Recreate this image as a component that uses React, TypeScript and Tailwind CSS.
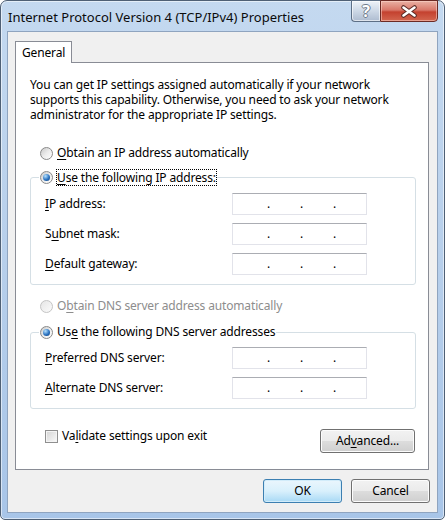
import React from "react";

const FONT = "font-['Segoe_UI','Noto_Sans',sans-serif]";

// underlined access key letter
function Key({ children }: { children: string }) {
    return <span className="underline decoration-[1px] underline-offset-[2px]">{children}</span>;
}

function Radio({ checked, disabled }: { checked?: boolean; disabled?: boolean }) {
    return (
        <span
            className={
                disabled
                    ? "flex h-[13px] w-[13px] shrink-0 items-center justify-center rounded-full border border-[#c4c4c4] bg-gradient-to-br from-[#e6e6e6] to-[#fbfbfb]"
                    : "flex h-[13px] w-[13px] shrink-0 items-center justify-center rounded-full border border-[#8a8a8a] bg-gradient-to-br from-[#c9c9c9] via-[#ececec] to-[#ffffff]"
            }
        >
            {checked && (
                <span className="h-[7px] w-[7px] rounded-full bg-[radial-gradient(circle_at_35%_30%,#b6e2ff,#2a72c0_55%,#0d3a70)]" />
            )}
        </span>
    );
}

function IpField() {
    return (
        <div className="flex h-[22px] w-[135px] items-center border border-[#e2e3ea] border-t-[#abadb3] bg-white pl-[19px]">
            <span className="w-[33px] text-center leading-[14px]">.</span>
            <span className="w-[33px] text-center leading-[14px]">.</span>
            <span className="w-[33px] text-center leading-[14px]">.</span>
        </div>
    );
}

function FieldRow({ label }: { label: React.ReactNode }) {
    return (
        <div className="flex h-[22px] items-center">
            <div className="w-[187px] leading-[16px]">{label}</div>
            <IpField />
        </div>
    );
}

function WinButton({ children, isDefault }: { children: React.ReactNode; isDefault?: boolean }) {
    return (
        <div
            className={
                isDefault
                    ? "flex h-[24px] w-[79px] items-center justify-center rounded-[3px] border border-[#3c7fb1] bg-gradient-to-b from-[#eaf6fd] via-[#d9f0fc] to-[#a7d9f5] shadow-[inset_0_0_0_1px_#d2ecfa]"
                    : "flex h-[24px] items-center justify-center rounded-[3px] border border-[#707070] bg-[linear-gradient(to_bottom,#f2f2f2_0%,#ebebeb_50%,#dddddd_50%,#cfcfcf_100%)] shadow-[inset_0_0_0_1px_#fcfcfc]"
            }
        >
            {children}
        </div>
    );
}

function App() {
    return (
        <div className={`${FONT} h-[520px] w-[445px] text-[12px] tracking-[-0.15px] text-black`}>
            <div className="flex h-full w-full flex-col rounded-t-[7px] rounded-b-[5px] border border-[#4f6075] bg-gradient-to-b from-[#c4d9f0] via-[#b7cfeb] to-[#a8c5e8] shadow-[inset_0_0_0_1px_rgba(255,255,255,0.55)]">
                {/* Title bar */}
                <div className="flex h-[30px] shrink-0 items-start justify-between">
                    <div className="pl-[7px] pt-[8px] text-[13px] leading-[16px] tracking-normal text-[#0b0b0b]">
                        Internet Protocol Version 4 (TCP/IPv4) Properties
                    </div>
                    <div className="-mt-px mr-[6px] flex">
                        <div className="flex h-[22px] w-[29px] items-center justify-center rounded-bl-[4px] border border-r-0 border-[#5d6f86] bg-gradient-to-b from-[#eef3f9] via-[#cdd8e6] to-[#aebcd0] shadow-[inset_0_0_0_1px_rgba(255,255,255,0.6)]">
                            <span className="text-[16px] font-bold leading-[16px] text-white [text-shadow:1px_0_0_#6f7c8c,-1px_0_0_#6f7c8c,0_1px_0_#6f7c8c,0_-1px_0_#6f7c8c]">
                                ?
                            </span>
                        </div>
                        <div className="flex h-[22px] w-[58px] items-center justify-center rounded-br-[4px] border border-[#6b2a24] bg-[linear-gradient(to_bottom,#eab1a4_0%,#d9786a_45%,#c4412f_55%,#d3664f_100%)] shadow-[inset_0_0_0_1px_rgba(255,220,210,0.5)]">
                            <svg width="18" height="13" viewBox="0 0 18 13">
                                <path d="M3.5 2.5 L14.5 10.5 M14.5 2.5 L3.5 10.5" stroke="#5a2a25" strokeWidth="4.6" strokeLinecap="round" />
                                <path d="M3.5 2.5 L14.5 10.5 M14.5 2.5 L3.5 10.5" stroke="#ffffff" strokeWidth="2.6" strokeLinecap="round" />
                            </svg>
                        </div>
                    </div>
                </div>

                {/* Client area */}
                <div className="mx-[6px] flex flex-1 flex-col border border-[#8fa4bf] bg-[#f0f0f0] pb-[9px] pl-[7px] pr-[8px] pt-[9px]">
                    {/* Tabs */}
                    <div className="flex h-[21px]">
                        <div className="relative z-10 flex h-[22px] items-center border border-b-0 border-[#898c95] bg-white px-[6px] leading-[16px]">
                            General
                        </div>
                    </div>

                    {/* Tab panel */}
                    <div className="flex h-[408px] flex-col border border-[#898c95] bg-white pb-[15px] pl-[14px] pr-[12px] pt-[14px]">
                        <p className="whitespace-nowrap leading-[15px]">
                            You can get IP settings assigned automatically if your network
                            <br />
                            supports this capability. Otherwise, you need to ask your network
                            <br />
                            administrator for the appropriate IP settings.
                        </p>

                        <div className="ml-[10px] mt-[23px] flex h-[16px] items-center gap-[4px]">
                            <Radio />
                            <span className="leading-[16px]">
                                <Key>O</Key>btain an IP address automatically
                            </span>
                        </div>

                        <fieldset className="m-0 mt-[8px] min-w-0 rounded-[3px] border border-[#d5dfe5] p-0 pb-[9px] pt-[8px]">
                            <legend className="ml-[8px] px-[1px]">
                                <span className="flex h-[16px] items-center gap-[4px]">
                                    <Radio checked />
                                    <span className="leading-[15px] outline-1 outline-dotted outline-black">
                                        <Key>U</Key>se the following IP address:
                                    </span>
                                </span>
                            </legend>
                            <div className="flex flex-col gap-[8px] pl-[14px]">
                                <FieldRow label={<><Key>I</Key>P address:</>} />
                                <FieldRow label={<>S<Key>u</Key>bnet mask:</>} />
                                <FieldRow label={<><Key>D</Key>efault gateway:</>} />
                            </div>
                        </fieldset>

                        <div className="ml-[10px] mt-[13px] flex h-[16px] items-center gap-[4px] text-[#8d8d8d]">
                            <Radio disabled />
                            <span className="leading-[16px]">
                                O<Key>b</Key>tain DNS server address automatically
                            </span>
                        </div>

                        <fieldset className="m-0 mt-[10px] min-w-0 rounded-[3px] border border-[#d5dfe5] p-0 pb-[9px] pt-[7px]">
                            <legend className="ml-[8px] px-[1px]">
                                <span className="flex h-[16px] items-center gap-[4px]">
                                    <Radio checked />
                                    <span className="leading-[16px]">
                                        Us<Key>e</Key> the following DNS server addresses
                                    </span>
                                </span>
                            </legend>
                            <div className="flex flex-col gap-[8px] pl-[14px]">
                                <FieldRow label={<><Key>P</Key>referred DNS server:</>} />
                                <FieldRow label={<><Key>A</Key>lternate DNS server:</>} />
                            </div>
                        </fieldset>

                        <div className="mr-px mt-[19px] flex items-start justify-between">
                            <div className="ml-[15px] flex h-[16px] items-center gap-[4px]">
                                <span className="h-[13px] w-[13px] border border-[#8f8f8f] bg-gradient-to-br from-[#d4d4d4] to-[#fafafa] shadow-[inset_0_0_0_1px_#f4f4f4]" />
                                <span className="leading-[16px]">
                                    Va<Key>l</Key>idate settings upon exit
                                </span>
                            </div>
                            <div className="mt-px w-[95px]">
                                <WinButton>
                                    Ad<Key>v</Key>anced...
                                </WinButton>
                            </div>
                        </div>
                    </div>

                    {/* Dialog buttons */}
                    <div className="-mr-px mt-[9px] flex justify-end gap-[9px]">
                        <WinButton isDefault>OK</WinButton>
                        <div className="w-[79px]">
                            <WinButton>Cancel</WinButton>
                        </div>
                    </div>
                </div>
                <div className="h-[6px] shrink-0" />
            </div>
        </div>
    );
}

export default App;
